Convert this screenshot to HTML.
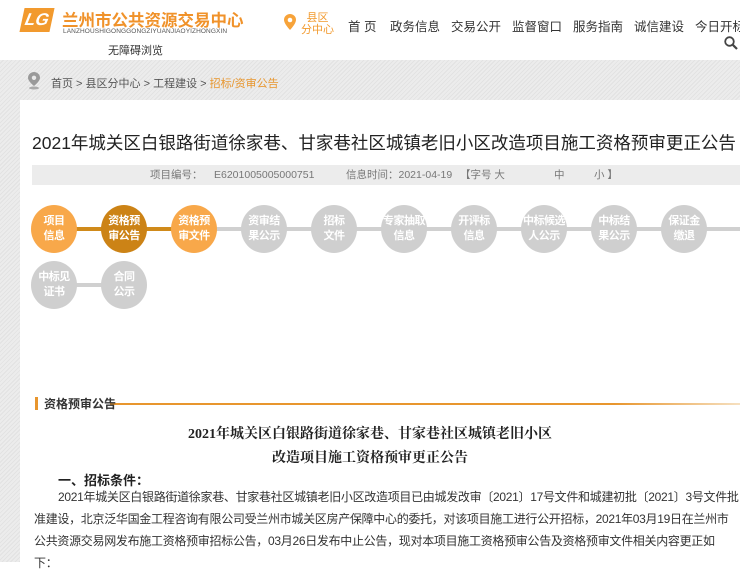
<!DOCTYPE html>
<html><head><meta charset="utf-8"><style>
*{margin:0;padding:0;box-sizing:border-box}
body{width:740px;height:562px;overflow:hidden;font-family:"Liberation Sans","Noto Sans CJK SC",sans-serif;background:#fff;position:relative}
.abs{position:absolute}
.gray{position:absolute;left:0;top:60px;width:740px;height:502px;background:repeating-linear-gradient(135deg,#ececec 0 2px,#e2e2e2 2px 3px)}
.panel{position:absolute;left:20px;top:100px;width:720px;height:462px;background:#fff}
.nav{top:16px;font-size:12.5px;color:#333;white-space:nowrap}
.c{position:absolute;width:46px;height:48px;border-radius:50%;background:#cfcfcf;color:#fff;font-size:11px;font-weight:bold;text-align:center;line-height:15px;padding-top:9px;white-space:nowrap;letter-spacing:-0.5px}
.p{font-size:12px;color:#333;line-height:22px;white-space:nowrap;letter-spacing:-0.3px}
</style></head><body>
<div class="abs" style="left:22px;top:8px;width:30px;height:24px;background:#f29a2e;transform:skewX(-12deg);color:#fff;font:italic bold 17px 'Liberation Sans',sans-serif;text-align:center;line-height:24px">LG</div>
<div class="abs" style="left:62px;top:7px;font-size:16.5px;font-weight:bold;color:#f0922a;white-space:nowrap">兰州市公共资源交易中心</div>
<div class="abs" style="left:63px;top:28px;font-size:6.5px;color:#555;letter-spacing:0.1px">LANZHOUSHIGONGGONGZIYUANJIAOYIZHONGXIN</div>
<div class="abs" style="left:108px;top:42px;font-size:11px;color:#333">无障碍浏览</div>
<svg class="abs" style="left:284px;top:14px" width="12" height="16" viewBox="0 0 12 16"><path d="M6 0C2.7 0 0 2.6 0 5.8 0 10 6 16 6 16s6-6 6-10.2C12 2.6 9.3 0 6 0z" fill="#f7a33a"/><circle cx="6" cy="6" r="2.3" fill="#fff"/></svg>
<div class="abs" style="left:301px;top:12px;font-size:11px;color:#f29a2e;line-height:12px;text-align:center">县区<br>分中心</div>
<div class="abs nav" style="left:348px">首 页</div>
<div class="abs nav" style="left:390px">政务信息</div>
<div class="abs nav" style="left:451px">交易公开</div>
<div class="abs nav" style="left:512px">监督窗口</div>
<div class="abs nav" style="left:573px">服务指南</div>
<div class="abs nav" style="left:634px">诚信建设</div>
<div class="abs nav" style="left:695px">今日开标</div>
<svg class="abs" style="left:724px;top:36px" width="14" height="14" viewBox="0 0 14 14"><circle cx="5.5" cy="5.5" r="4.3" fill="none" stroke="#444" stroke-width="1.8"/><path d="M8.8 8.8L13 13" stroke="#444" stroke-width="2.2"/></svg>
<div class="gray"></div>
<svg class="abs" style="left:28px;top:72px" width="12" height="18" viewBox="0 0 12 18"><path d="M6 0C2.7 0 0 2.6 0 5.8 0 9.5 6 14 6 14s6-4.5 6-8.2C12 2.6 9.3 0 6 0z" fill="#999"/><circle cx="6" cy="5.8" r="2.2" fill="#e8e8e8"/><ellipse cx="6" cy="16" rx="5" ry="1.5" fill="#aaa"/></svg>
<div class="abs" style="left:51px;top:75px;font-size:11px;color:#555">首页 &gt; 县区分中心 &gt; 工程建设 &gt; <span style="color:#e8962e">招标/资审公告</span></div>
<div class="panel"></div>
<div class="abs" style="left:32px;top:130px;font-size:17.5px;color:#222;white-space:nowrap">2021年城关区白银路街道徐家巷、甘家巷社区城镇老旧小区改造项目施工资格预审更正公告</div>
<div class="abs" style="left:32px;top:165px;width:708px;height:20px;background:#ececec;font-size:10.5px;color:#777;line-height:20px;white-space:nowrap">
<span style="position:absolute;left:118px">项目编号：</span><span style="position:absolute;left:182px">E6201005005000751</span><span style="position:absolute;left:314px">信息时间：2021-04-19</span><span style="position:absolute;left:428px">【字号 大</span><span style="position:absolute;left:522px">中</span><span style="position:absolute;left:562px">小 】</span></div>
<div class="abs" style="left:54px;top:227px;width:686px;height:4px;background:#d0d0d0"></div>
<div class="abs" style="left:54px;top:227px;width:140px;height:4px;background:#d08a1a"></div>
<div class="abs" style="left:54px;top:283px;width:70px;height:4px;background:#d0d0d0"></div>
<div class="c" style="left:31px;top:205px;background:#f8a84a">项目<br>信息</div>
<div class="c" style="left:101px;top:205px;background:#cc8316">资格预<br>审公告</div>
<div class="c" style="left:171px;top:205px;background:#f8a84a">资格预<br>审文件</div>
<div class="c" style="left:241px;top:205px">资审结<br>果公示</div>
<div class="c" style="left:311px;top:205px">招标<br>文件</div>
<div class="c" style="left:381px;top:205px">专家抽取<br>信息</div>
<div class="c" style="left:451px;top:205px">开评标<br>信息</div>
<div class="c" style="left:521px;top:205px">中标候选<br>人公示</div>
<div class="c" style="left:591px;top:205px">中标结<br>果公示</div>
<div class="c" style="left:661px;top:205px">保证金<br>缴退</div>
<div class="c" style="left:31px;top:261px">中标见<br>证书</div>
<div class="c" style="left:101px;top:261px">合同<br>公示</div>
<div class="abs" style="left:35px;top:397px;width:3px;height:13px;background:#e8962e"></div>
<div class="abs" style="left:110px;top:403px;width:630px;height:2px;background:linear-gradient(90deg,#e8962e,#e8962e 80%,#f6e0c0)"></div>
<div class="abs" style="left:44px;top:395px;font-size:12px;color:#333;font-weight:bold">资格预审公告</div>
<div class="abs" style="left:0;top:423px;width:740px;text-align:center;font-family:'Liberation Serif','Noto Serif CJK SC',serif;font-size:14px;font-weight:bold;color:#222;line-height:24px">2021年城关区白银路街道徐家巷、甘家巷社区城镇老旧小区<br>改造项目施工资格预审更正公告</div>
<div class="abs" style="left:58px;top:470px;font-size:13px;font-weight:bold;color:#222">一、招标条件：</div>
<div class="abs p" style="left:34px;top:486px"><span style="padding-left:24px"></span>2021年城关区白银路街道徐家巷、甘家巷社区城镇老旧小区改造项目已由城发改审〔2021〕17号文件和城建初批〔2021〕3号文件批<br>准建设，北京泛华国金工程咨询有限公司受兰州市城关区房产保障中心的委托，对该项目施工进行公开招标，2021年03月19日在兰州市<br>公共资源交易网发布施工资格预审招标公告，03月26日发布中止公告，现对本项目施工资格预审公告及资格预审文件相关内容更正如<br>下：</div>
</body></html>
